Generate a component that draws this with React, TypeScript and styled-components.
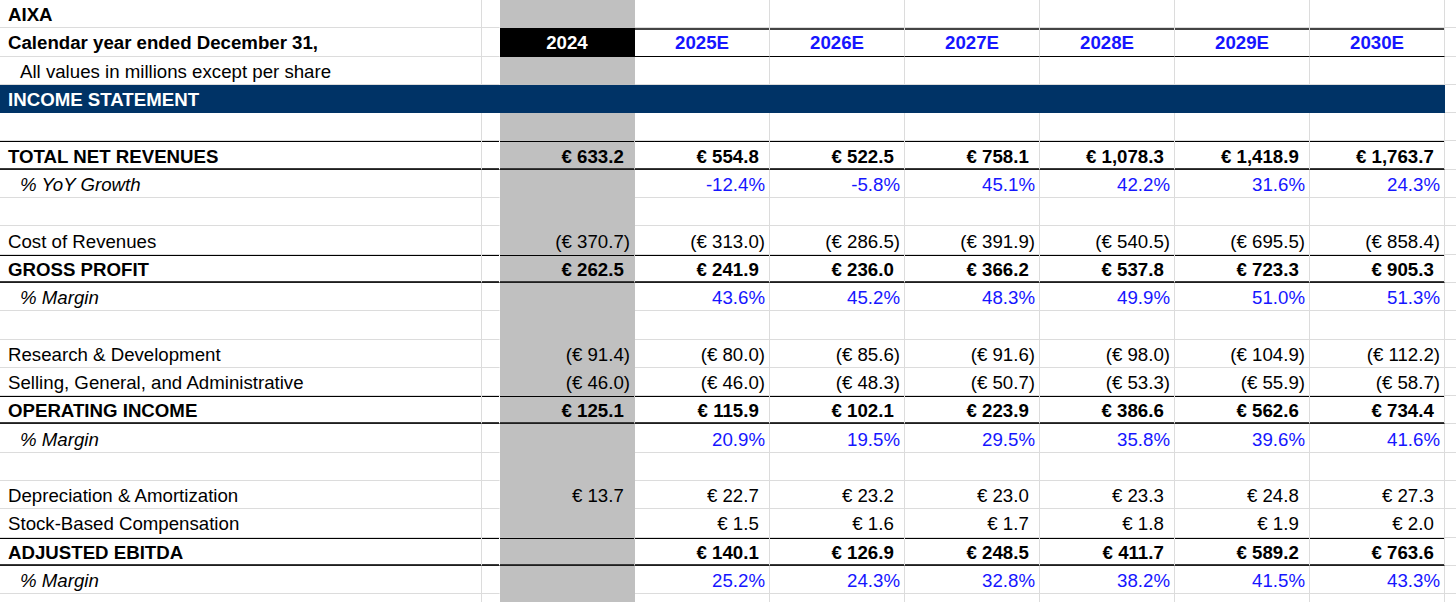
import React from 'react';
import styled, { createGlobalStyle, css } from 'styled-components';

const GlobalStyle = createGlobalStyle`
  html, body {
    margin: 0;
    padding: 0;
    background: #fff;
  }
  body {
    font-family: "Liberation Sans", Arial, sans-serif;
    font-size: 18.67px;
    color: #000;
  }
`;

const GRID = '#dcdcdc';
const INPUT_BLUE = '#1616ff';
const FILLS = {
  silver: '#c0c0c0',
  navy: '#003366',
  black: '#000000',
};

type Fill = keyof typeof FILLS;
type Rule = 'total' | 'head';
type Kind = 'money' | 'pct';

type Line = {
  label?: string;
  kind?: Kind;
  values?: (number | null)[];
  total?: boolean;
  indent?: boolean;
  italic?: boolean;
};

const YEARS = ['2025E', '2026E', '2027E', '2028E', '2029E', '2030E'];

const LINES: Line[] = [
  {},
  { label: 'TOTAL NET REVENUES', kind: 'money', total: true, values: [633.2, 554.8, 522.5, 758.1, 1078.3, 1418.9, 1763.7] },
  { label: '% YoY Growth', kind: 'pct', indent: true, italic: true, values: [null, -12.4, -5.8, 45.1, 42.2, 31.6, 24.3] },
  {},
  { label: 'Cost of Revenues', kind: 'money', values: [-370.7, -313.0, -286.5, -391.9, -540.5, -695.5, -858.4] },
  { label: 'GROSS PROFIT', kind: 'money', total: true, values: [262.5, 241.9, 236.0, 366.2, 537.8, 723.3, 905.3] },
  { label: '% Margin', kind: 'pct', indent: true, italic: true, values: [null, 43.6, 45.2, 48.3, 49.9, 51.0, 51.3] },
  {},
  { label: 'Research & Development', kind: 'money', values: [-91.4, -80.0, -85.6, -91.6, -98.0, -104.9, -112.2] },
  { label: 'Selling, General, and Administrative', kind: 'money', values: [-46.0, -46.0, -48.3, -50.7, -53.3, -55.9, -58.7] },
  { label: 'OPERATING INCOME', kind: 'money', total: true, values: [125.1, 115.9, 102.1, 223.9, 386.6, 562.6, 734.4] },
  { label: '% Margin', kind: 'pct', indent: true, italic: true, values: [null, 20.9, 19.5, 29.5, 35.8, 39.6, 41.6] },
  {},
  { label: 'Depreciation & Amortization', kind: 'money', values: [13.7, 22.7, 23.2, 23.0, 23.3, 24.8, 27.3] },
  { label: 'Stock-Based Compensation', kind: 'money', values: [null, 1.5, 1.6, 1.7, 1.8, 1.9, 2.0] },
  { label: 'ADJUSTED EBITDA', kind: 'money', total: true, values: [null, 140.1, 126.9, 248.5, 411.7, 589.2, 763.6] },
  { label: '% Margin', kind: 'pct', indent: true, italic: true, values: [null, 25.2, 24.3, 32.8, 38.2, 41.5, 43.3] },
  {},
];

const Sheet = styled.div`
  display: flex;
  flex-direction: column;
  width: 1456px;
  overflow: hidden;
`;

const Row = styled.div`
  display: grid;
  grid-template-columns: 482px 18px repeat(7, 135px) 1fr;
  height: 28.3px;
`;

const Cell = styled.div<{ $fill?: Fill; $rule?: Rule; $noRight?: boolean }>`
  box-sizing: border-box;
  display: flex;
  align-items: center;
  min-width: 0;
  padding-top: 3px;
  white-space: nowrap;
  background: ${(p) => (p.$fill ? FILLS[p.$fill] : '#fff')};
  border-right: 1px solid ${(p) => (p.$fill || p.$noRight ? 'transparent' : GRID)};
  border-bottom: 1px solid ${(p) => (p.$fill ? 'transparent' : GRID)};

  ${(p) =>
    p.$rule === 'total' &&
    css`
      border-bottom-color: #1e1e1e;
      box-shadow: inset 0 1px 0 #000, inset 0 -1px 0 #3a3a3a;
    `}
  ${(p) =>
    p.$rule === 'head' &&
    css`
      border-bottom-color: #000;
      box-shadow: inset 0 2px 0 #444;
    `}
`;

const Label = styled(Cell)<{ $indent?: boolean; $bold?: boolean; $italic?: boolean; $light?: boolean }>`
  padding-left: ${(p) => (p.$indent ? '20px' : '8px')};
  font-weight: ${(p) => (p.$bold ? 700 : 400)};
  font-style: ${(p) => (p.$italic ? 'italic' : 'normal')};
  color: ${(p) => (p.$light ? '#fff' : '#000')};
  overflow: visible;
`;

const Value = styled(Cell)<{ $bold?: boolean; $blue?: boolean }>`
  justify-content: flex-end;
  padding-right: 4px;
  font-weight: ${(p) => (p.$bold ? 700 : 400)};
  color: ${(p) => (p.$blue ? INPUT_BLUE : '#000')};
`;

const YearHead = styled(Cell)<{ $actual?: boolean }>`
  justify-content: center;
  font-weight: 700;
  color: ${(p) => (p.$actual ? '#fff' : INPUT_BLUE)};
`;

const Tail = styled.div`
  box-sizing: border-box;
  border-bottom: 1px solid ${GRID};
`;

// Excel's accounting format leaves room for a ")" after positive numbers
const Pad = styled.span`
  visibility: hidden;
`;

function money(v: number) {
  const text = Math.abs(v).toLocaleString('en-US', {
    minimumFractionDigits: 1,
    maximumFractionDigits: 1,
  });
  if (v < 0) return <>(€ {text})</>;
  return (
    <>
      € {text}
      <Pad>)</Pad>
    </>
  );
}

function pct(v: number) {
  return `${v.toFixed(1)}%`;
}

const PlainRow: React.FC<{ children?: React.ReactNode; bold?: boolean; indent?: boolean }> = ({
  children,
  bold,
  indent,
}) => (
  <Row>
    <Label $bold={bold} $indent={indent}>
      {children}
    </Label>
    <Cell $noRight />
    <Cell $fill="silver" />
    {YEARS.map((y) => (
      <Cell key={y} />
    ))}
    <Tail />
  </Row>
);

const DataRow: React.FC<{ line: Line }> = ({ line }) => {
  const rule = line.total ? 'total' : undefined;
  const values = line.values ?? [];
  return (
    <Row>
      <Label $rule={rule} $bold={line.total} $indent={line.indent} $italic={line.italic}>
        {line.label}
      </Label>
      <Cell $noRight $rule={rule} />
      {[0, 1, 2, 3, 4, 5, 6].map((i) => {
        const v = values[i];
        return (
          <Value
            key={i}
            $fill={i === 0 ? 'silver' : undefined}
            $rule={rule}
            $bold={line.total}
            $blue={line.kind === 'pct'}
          >
            {v == null ? null : line.kind === 'pct' ? pct(v) : money(v)}
          </Value>
        );
      })}
      <Tail />
    </Row>
  );
};

export default function App() {
  return (
    <>
      <GlobalStyle />
      <Sheet>
        <PlainRow bold>AIXA</PlainRow>
        <Row>
          <Label $bold>Calendar year ended December 31,</Label>
          <Cell $noRight />
          <YearHead $fill="black" $actual>
            2024
          </YearHead>
          {YEARS.map((y) => (
            <YearHead key={y} $rule="head">
              {y}
            </YearHead>
          ))}
          <Tail />
        </Row>
        <PlainRow indent>All values in millions except per share</PlainRow>
        <Row>
          <Label $fill="navy" $bold $light>
            INCOME STATEMENT
          </Label>
          <Cell $fill="navy" />
          <Cell $fill="navy" />
          {YEARS.map((y) => (
            <Cell key={y} $fill="navy" />
          ))}
          <Tail />
        </Row>
        {LINES.map((line, i) => (
          <DataRow key={i} line={line} />
        ))}
      </Sheet>
    </>
  );
}
